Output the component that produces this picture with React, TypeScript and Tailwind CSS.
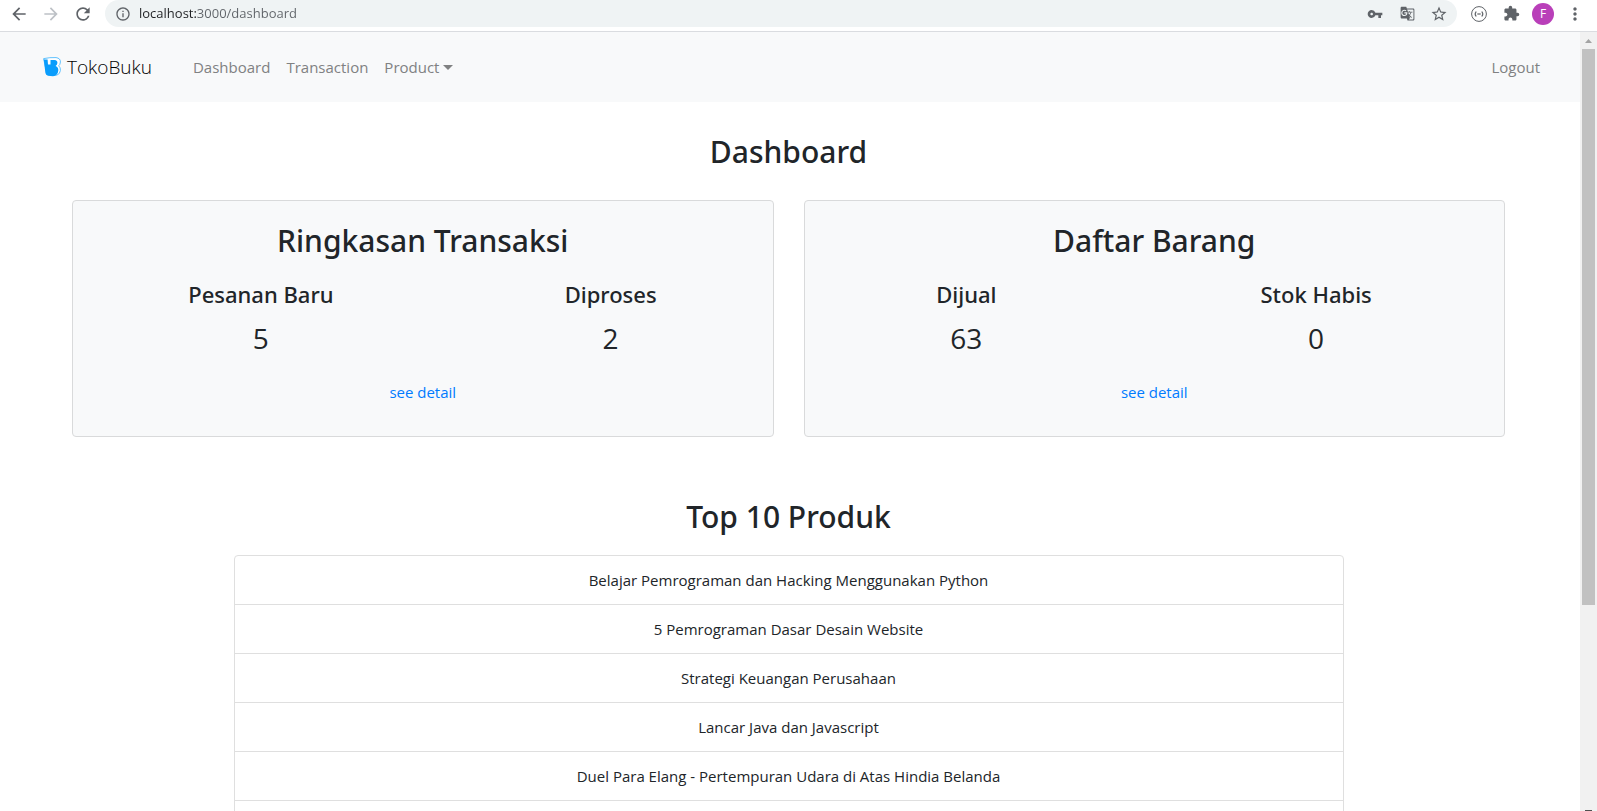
import type { ReactNode } from "react";
import { MdArrowBack, MdArrowForward, MdRefresh, MdInfoOutline, MdVpnKey, MdGTranslate, MdStarBorder, MdExtension, MdMoreVert } from "react-icons/md";

const products = [
  "Belajar Pemrograman dan Hacking Menggunakan Python",
  "5 Pemrograman Dasar Desain Website",
  "Strategi Keuangan Perusahaan",
  "Lancar Java dan Javascript",
  "Duel Para Elang - Pertempuran Udara di Atas Hindia Belanda",
  "",
];

const cards = [
  { title: "Ringkasan Transaksi", inset: "ml-[13px] -mr-[13px]", stats: [["Pesanan Baru", "5"], ["Diproses", "2"]] },
  { title: "Daftar Barang", inset: "-ml-[13px] mr-[13px]", stats: [["Dijual", "63"], ["Stok Habis", "0"]] },
];

function IconButton({ label, children }: { label: string; children: ReactNode }) {
  return (
    <button type="button" aria-label={label} className="flex size-8 shrink-0 items-center justify-center text-[#5f6368]">
      {children}
    </button>
  );
}

function BrowserBar() {
  return (
    <header className="flex h-8 shrink-0 items-start border-b border-[#dadce0] bg-white pl-[3px] pr-[6px]">
      <div className="flex h-[27px] w-full items-center">
        <IconButton label="Back"><MdArrowBack size={20} /></IconButton>
        <IconButton label="Forward"><MdArrowForward size={20} className="text-[#bdc1c6]" /></IconButton>
        <IconButton label="Reload"><MdRefresh size={20} /></IconButton>
        <div className="ml-[6px] mr-[6px] flex h-full min-w-0 flex-1 items-center rounded-full bg-[#eff3f4] pl-[10px] pr-[2px]">
          <MdInfoOutline size={16} className="shrink-0 text-[#5f6368]" />
          <input
            aria-label="Address"
            defaultValue="localhost:3000/dashboard"
            className="ml-2 min-w-0 flex-1 bg-[linear-gradient(to_right,#202124_57px,#5f6368_57px)] bg-clip-text font-['Open_Sans',sans-serif] text-[13px] text-transparent caret-[#202124] outline-none"
          />
          <IconButton label="Passwords"><MdVpnKey size={16} /></IconButton>
          <IconButton label="Translate"><MdGTranslate size={15} /></IconButton>
          <IconButton label="Bookmark"><MdStarBorder size={18} /></IconButton>
        </div>
        <IconButton label="JSON viewer">
          <svg width="16" height="16" viewBox="0 0 16 16" fill="none" stroke="currentColor">
            <circle cx="8" cy="8" r="7.4" />
            <path d="M5.200 5.500Q3.200 8 5.200 10.500M10.800 5.500Q12.800 8 10.800 10.500" strokeWidth="1.200" />
            <path d="M6.300 8h3.400" strokeWidth="1.200" />
          </svg>
        </IconButton>
        <IconButton label="Extensions"><MdExtension size={17} /></IconButton>
        <IconButton label="Profile">
          <span className="flex size-[22px] items-center justify-center rounded-full bg-[#b93fb9] font-['Open_Sans',sans-serif] text-xs text-white">F</span>
        </IconButton>
        <IconButton label="Menu"><MdMoreVert size={20} /></IconButton>
      </div>
    </header>
  );
}

function Logo() {
  return (
    <svg width="18" height="20" viewBox="0 0 18 20">
      <path d="M.6 1.600Q7 .3 13 .6 17.600 1.200 17.400 5 17.200 7.800 15.600 8.800 17.700 10.400 17.400 13.500 17 17 13.800 18.200L4 17.500Z" fill="#fff" stroke="#5fc0fd" strokeWidth="1" />
      <path d="M.8 2.600H4.600L5 7.500H7.500V3H11.500Q14.600 3.400 14.400 6 14.200 8.200 12.600 8.900 15.600 10 15.300 13.500 14.800 18.500 10 19.300L5 18.800Q2.800 18.300 2.400 16Z" fill="#0a9dfc" />
    </svg>
  );
}

function Navbar() {
  return (
    <nav className="flex h-[70px] items-center bg-[#f8f9fa] pl-[43px] pr-10 text-[15px] text-[#808182]">
      <a href="#" className="flex items-center gap-[6px] text-[19px] font-light text-black">
        <Logo />
        TokoBuku
      </a>
      <div className="ml-[41px] flex items-center gap-4">
        <a href="#">Dashboard</a>
        <a href="#">Transaction</a>
        <button type="button" className="flex items-center gap-1">
          Product
          <svg width="10" height="5" viewBox="0 0 10 5" fill="currentColor"><path d="M0 0h10L5 5Z" /></svg>
        </button>
      </div>
      <a href="#" className="ml-auto">Logout</a>
    </nav>
  );
}

function Scrollbar() {
  return (
    <div className="flex w-[17px] shrink-0 flex-col items-center bg-[#f1f1f1]" aria-hidden="true">
      <div className="flex h-[17px] items-center">
        <svg width="7" height="4" viewBox="0 0 7 4" fill="#a3a3a3"><path d="M0 4L3.500 0 7 4Z" /></svg>
      </div>
      <div className="flex w-full grow flex-col items-center">
        <div className="h-[73%] w-[13px] bg-[#c1c1c1]" />
      </div>
      <div className="h-px w-[7px] bg-[#505050]" />
    </div>
  );
}

export default function App() {
  return (
    <div className="flex h-screen flex-col overflow-hidden bg-white font-['Open_Sans','Noto_Sans',sans-serif] text-[#212529]">
      <BrowserBar />
      <div className="flex min-h-0 grow">
        <div className="min-w-0 grow overflow-hidden">
          <Navbar />
          <main className="pl-[72px] pr-[75px] pt-[31px] text-center">
            <h1 className="font-['Noto_Sans',sans-serif] text-[30px] font-medium leading-[38px]">Dashboard</h1>
            <div className="mt-[29px] grid grid-cols-2 gap-[30px]">
              {cards.map((card) => (
                <section key={card.title} className="rounded-[4px] border border-[#d9dadb] bg-[#f8f9fa] pb-8 pt-[21px]">
                  <h2 className="font-['Noto_Sans',sans-serif] text-[30px] font-medium leading-[38px]">{card.title}</h2>
                  <dl className={`mt-5 grid grid-cols-2 ${card.inset}`}>
                    {card.stats.map(([label, value]) => (
                      <div key={label}>
                        <dt className="font-['Noto_Sans',sans-serif] text-[22px] font-medium leading-[29px]">{label}</dt>
                        <dd className="mt-2 text-[28px] leading-[42px]">{value}</dd>
                      </div>
                    ))}
                  </dl>
                  <a href="#" className="mt-[21px] inline-block text-[15px] leading-6 text-[#007bff]">see detail</a>
                </section>
              ))}
            </div>
            <div className="mx-auto mt-[61px] max-w-[1110px]">
              <h2 className="font-['Noto_Sans',sans-serif] text-[30px] font-medium leading-[38px]">Top 10 Produk</h2>
              <ul className="mt-[19px] rounded-t-[4px] border border-[#dfdfdf]">
                {products.map((name) => (
                  <li key={name} className="h-[49px] border-b border-[#dfdfdf] py-3 text-[15px] leading-6">{name}</li>
                ))}
              </ul>
            </div>
          </main>
        </div>
        <Scrollbar />
      </div>
    </div>
  );
}
